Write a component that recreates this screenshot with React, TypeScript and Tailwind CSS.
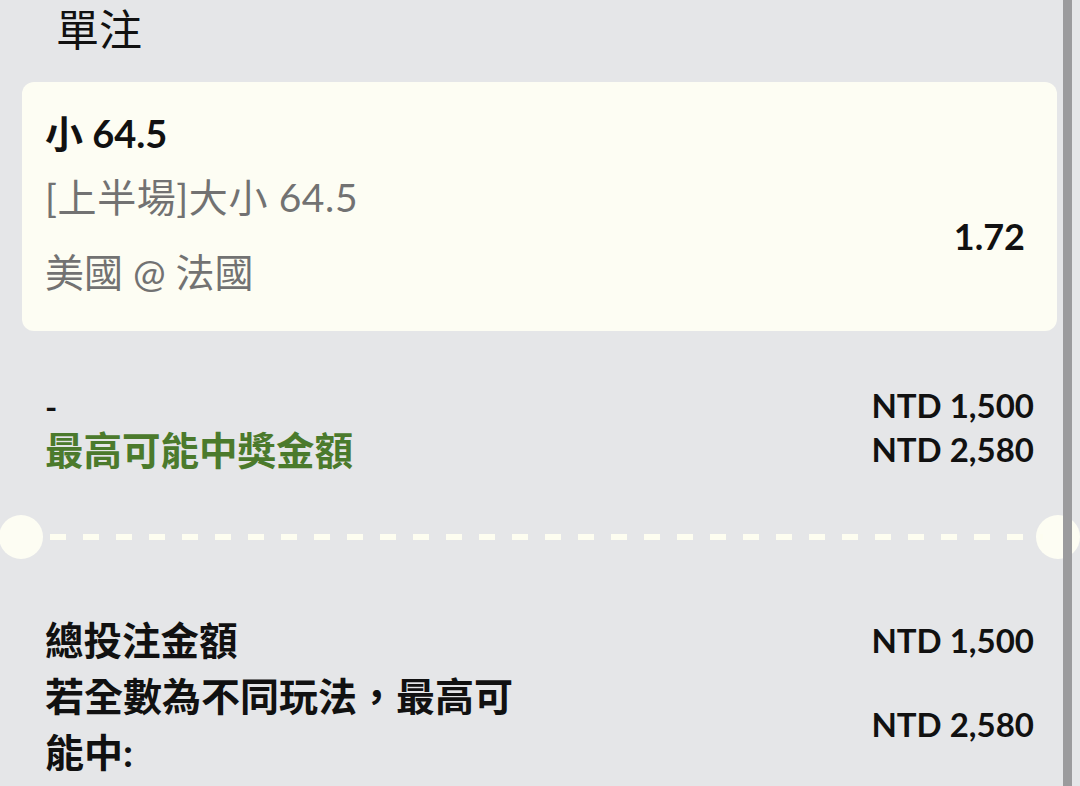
const font = "font-['Lato','Noto_Sans_CJK_TC',sans-serif]";

const App = () => {
  return (
    <div className={`flex h-[786px] w-[1080px] overflow-hidden bg-[#e5e6e8] text-[#111] ${font}`}>
      <div className="relative flex-1">
        <h1 className="pl-[56px] text-[43px] leading-[60px] font-normal">單注</h1>

        {/* selection card */}
        <div className="ml-[22px] mr-[6px] mt-[22px] flex justify-between rounded-[12px] bg-[#fdfdf3] pl-[23px] pr-[32px] pt-[27px] pb-[35px]">
          <div className="flex flex-col">
            <div className="text-[38px] leading-[48px] font-bold">小 64.5</div>
            <div className="mt-[16px] text-[39px] leading-[48px] tracking-[0.6px] text-[#727272]">[上半場]大小 64.5</div>
            <div className="mt-[27px] text-[39px] leading-[48px] text-[#727272]">美國 @ 法國</div>
          </div>
          <div className="self-end mb-[36px] text-[36px] leading-[48px] font-bold">1.72</div>
        </div>

        {/* stake row */}
        <div className="mt-[52px] flex justify-between pl-[45px] pr-[29px]">
          <div className="flex flex-col font-bold">
            <div className="text-[33px] leading-[46px]">-</div>
            <div className="-mt-[2px] text-[38.5px] leading-[46px] text-[#4b7a2c]">最高可能中獎金額</div>
          </div>
          <div className="flex flex-col items-end text-[33px] leading-[44px] font-bold">
            <div>NTD 1,500</div>
            <div>NTD 2,580</div>
          </div>
        </div>

        {/* ticket divider */}
        <div className="relative mt-[42px] h-[44px]">
          <div className="absolute left-[-1px] top-0 h-[44px] w-[44px] rounded-full bg-[#fdfdf3]" />
          <div className="absolute right-[-17px] top-0 h-[44px] w-[44px] rounded-full bg-[#fdfdf3]" />
          <div className="absolute left-[50px] right-[20px] top-[19px] h-[6px] bg-[repeating-linear-gradient(90deg,#fdfdf0_0px,#fdfdf0_16px,transparent_16px,transparent_33px)]" />
        </div>

        {/* totals */}
        <div className="mt-[53px] flex flex-col pl-[45px] pr-[29px] font-bold">
          <div className="flex items-center justify-between">
            <div className="text-[38.5px] leading-[56px]">總投注金額</div>
            <div className="text-[33px] leading-[56px]">NTD 1,500</div>
          </div>
          <div className="flex items-center justify-between">
            <div className="max-w-[485px] text-[39px] leading-[56px]">若全數為不同玩法，最高可能中:</div>
            <div className="text-[33px] leading-[56px]">NTD 2,580</div>
          </div>
        </div>
      </div>
      <div className="relative z-10 w-[9px] bg-[#9b9b9d]" />
      <div className="w-[8px]" />
    </div>
  );
};

export default App;
